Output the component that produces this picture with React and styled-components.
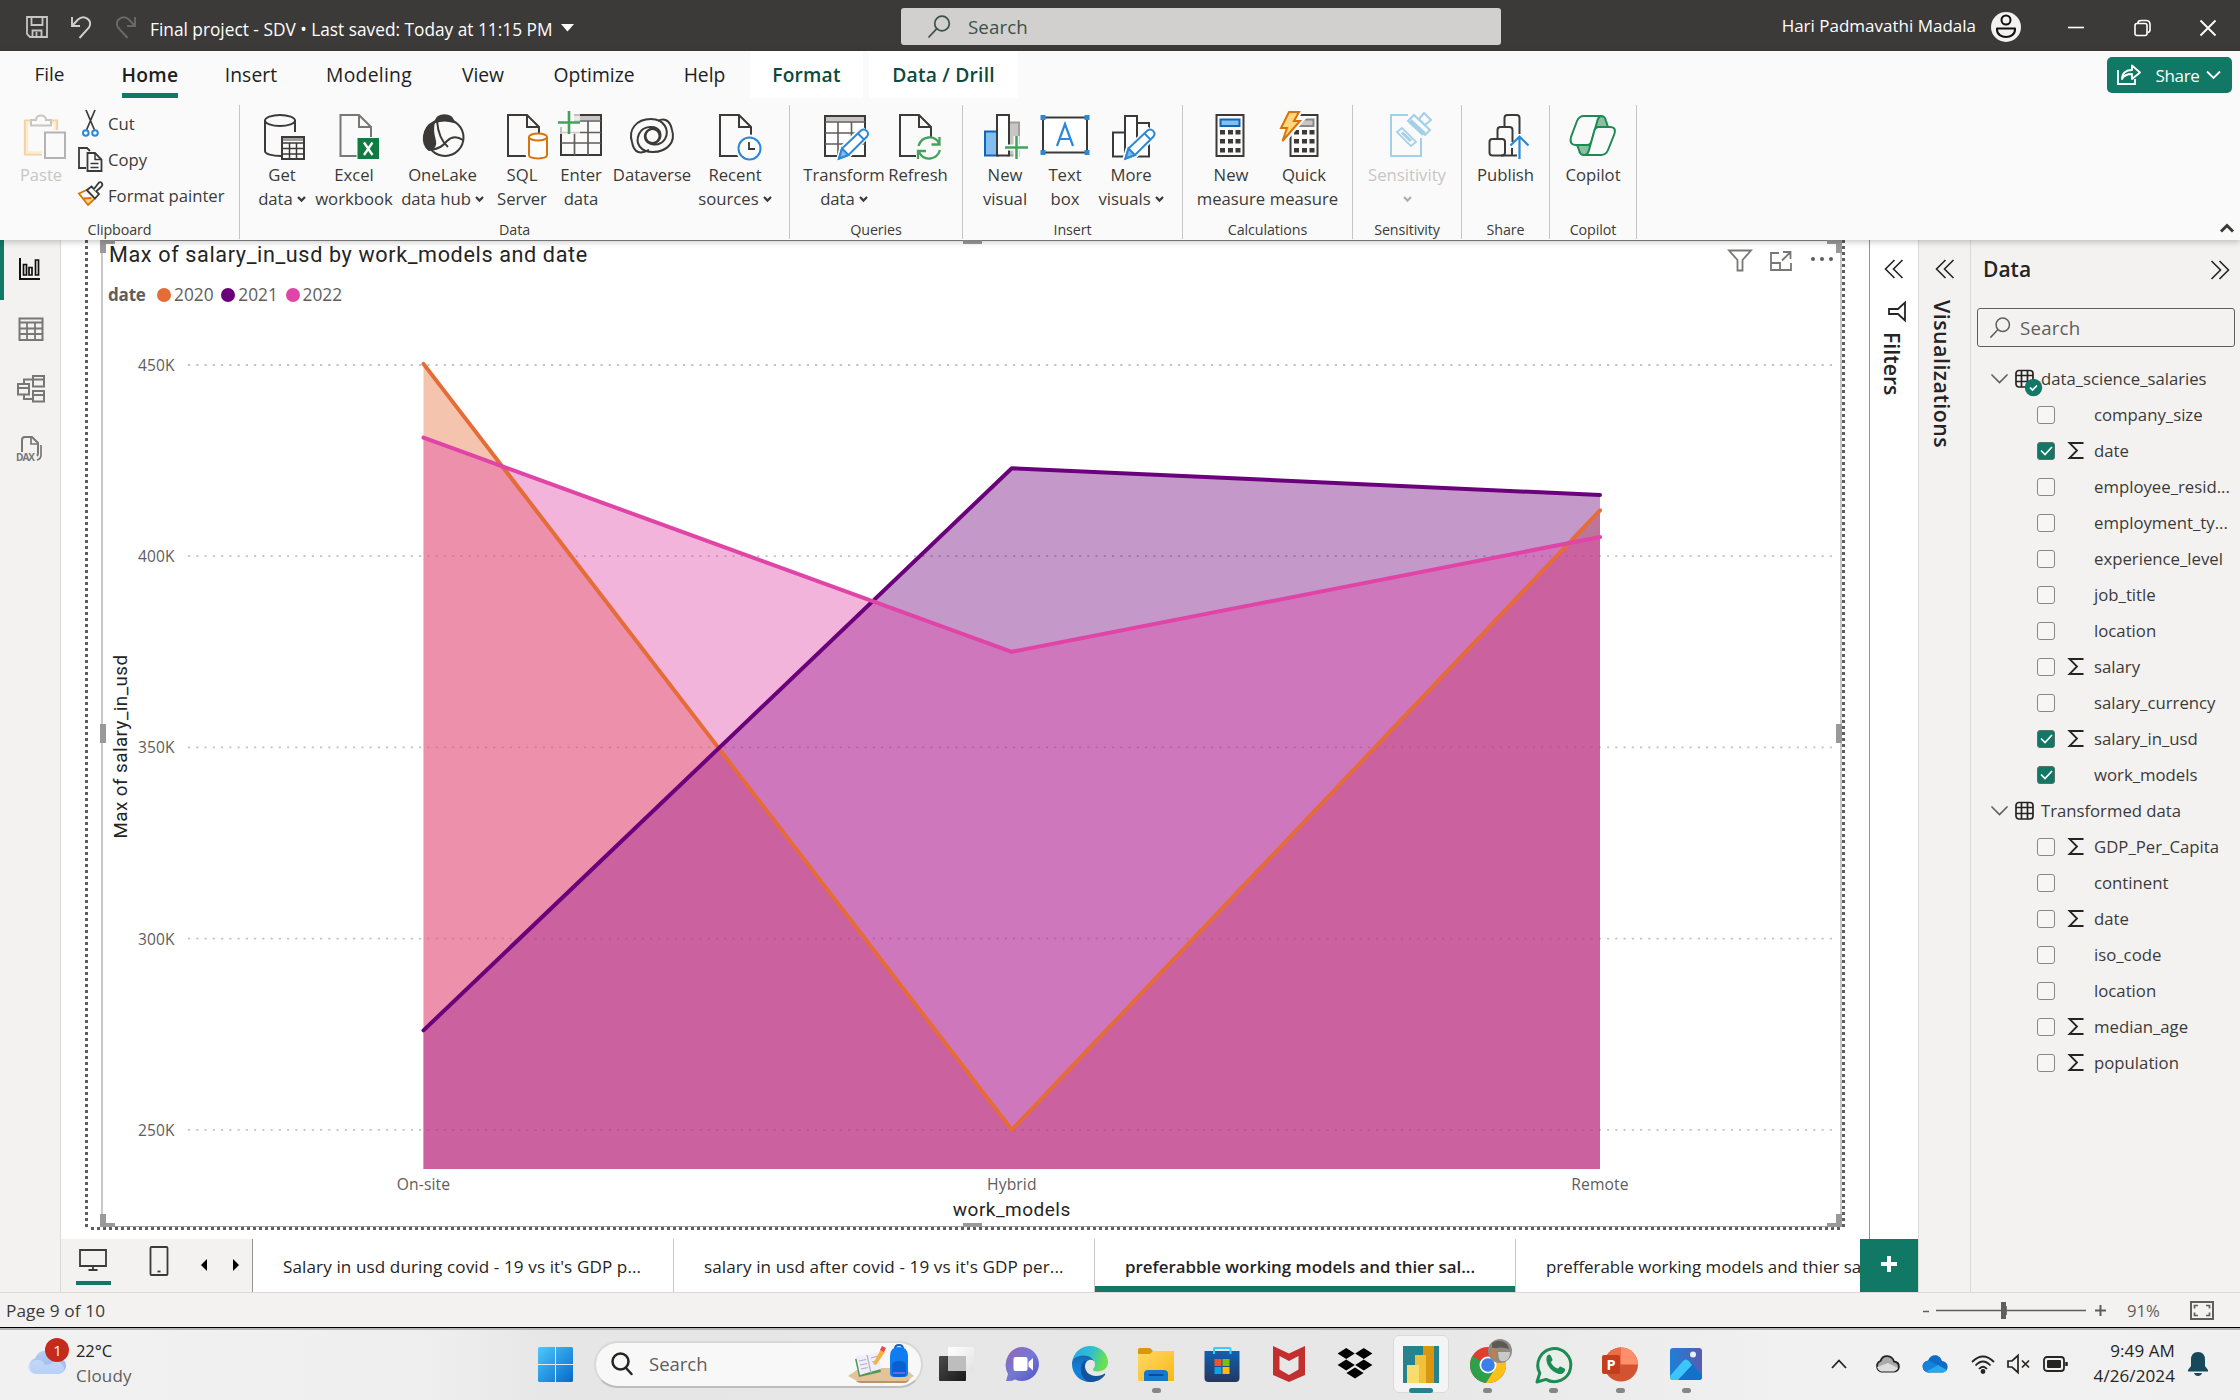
import React from 'react';
import styled, { createGlobalStyle, css } from 'styled-components';

const GREEN = '#117865';
const PANE = '#f3f2f1';
const UI = '"Open Sans", "Noto Sans", sans-serif';
const DIN = 'Roboto, "Noto Sans", sans-serif';

const Global = createGlobalStyle`
  html, body { margin: 0; padding: 0; }
  body { width: 2240px; height: 1400px; overflow: hidden; font-family: ${UI}; background: #fff; }
  * { box-sizing: border-box; }
  svg { display: block; overflow: visible; flex: none; }
`;

const Screen = styled.div`
  width: 2240px;
  height: 1400px;
  display: flex;
  flex-direction: column;
  overflow: hidden;
`;

const Text = styled.span`
  font-size: ${p => p.$size || 17}px;
  letter-spacing: ${p => p.$ls || 0}px;
  font-weight: ${p => p.$weight || 400};
  color: ${p => p.$color || '#252423'};
  white-space: nowrap;
  line-height: 1.35;
`;

/* ---------- title bar ---------- */
const TitleBar = styled.header`
  height: 51px;
  background: #3b3a38;
  display: grid;
  grid-template-columns: 901px 600px 1fr;
`;
const QuickAccess = styled.div`
  display: flex;
  align-items: center;
  padding: 2px 0 0 25px;
`;
const QuickIcon = styled.div`
  width: ${p => p.$w}px;
`;
const FileTitle = styled.div`
  display: flex;
  align-items: center;
  gap: 9px;
  padding-top: 6px;
`;
const TitleCaret = styled.svg`
  margin-bottom: 4px;
`;
const TitleSearch = styled.div`
  height: 37px;
  margin-top: 8px;
  background: #d2d0ce;
  border-radius: 3px;
  display: flex;
  align-items: center;
  gap: 17px;
  padding: 1px 0 0 26px;
`;
const Account = styled.div`
  display: flex;
  align-items: center;
  justify-content: flex-end;
  padding-top: 2px;
`;
const Avatar = styled.div`
  margin-left: 15px;
  width: 30px;
  height: 30px;
  border-radius: 50%;
  background: #f3f2f1;
`;
const WindowButton = styled.div`
  width: 66px;
  display: flex;
  justify-content: center;
`;
const WindowButtons = styled.div`
  display: flex;
  align-items: center;
  margin: 2px -1px 0 22px;
`;

/* ---------- ribbon ---------- */
const Ribbon = styled.section`
  height: 189px;
  background: #fafafa;
  position: relative;
  z-index: 2;
  box-shadow: 0 2px 6px rgba(0, 0, 0, 0.22);
  display: flex;
  flex-direction: column;
`;
const TabRow = styled.nav`
  height: 47px;
  display: flex;
`;
const RibbonTab = styled.div`
  width: ${p => p.$w}px;
  margin-right: ${p => p.$gap || 0}px;
  background: ${p => (p.$context ? '#fff' : 'transparent')};
  display: flex;
  justify-content: center;
`;
const TabLabel = styled.div`
  display: flex;
  align-items: center;
  padding-top: 6px;
  border-bottom: 5px solid ${p => (p.$active ? GREEN : 'transparent')};
`;
const ShareButton = styled.div`
  margin: 6px 8px 5px auto;
  width: 125px;
  height: 36px;
  border-radius: 5px;
  background: ${GREEN};
  display: flex;
  align-items: center;
  padding: 0 11px 0 10px;
  justify-content: space-between;
`;
const ShareWord = styled.div`
  padding: 2px 0 0 8px;
`;
const RibbonBody = styled.div`
  flex: 1;
  display: flex;
  padding: 7px 0 3px;
`;
const Group = styled.div`
  width: ${p => p.$w}px;
  border-right: 1px solid #c8c6c4;
  display: flex;
  flex-direction: column;
`;
const GroupBody = styled.div`
  height: 112px;
  display: flex;
  padding-left: ${p => p.$pad || 0}px;
`;
const GroupLabel = styled.div`
  display: flex;
  justify-content: center;
  margin-top: 3px;
`;
const BigButton = styled.div`
  width: ${p => p.$w}px;
  display: flex;
  flex-direction: column;
  align-items: center;
  padding-top: 3px;
`;
const IconSlot = styled.div`
  width: 52px;
  height: 55px;
  margin-left: ${p => (p.$dx || 0) * 2}px;
`;
const LabelLine = styled.div`
  height: 24px;
  display: flex;
  align-items: center;
  gap: 4px;
`;
const ClipList = styled.div`
  padding-top: 1px;
  display: flex;
  flex-direction: column;
`;
const ClipRow = styled.div`
  height: 36px;
  display: flex;
  align-items: center;
`;
const ClipIcon = styled.div`
  width: 30px;
  height: 30px;
  margin-left: -4px;
`;
const Collapse = styled.div`
  margin-left: auto;
  align-self: flex-end;
  padding: 0 6px 6px 0;
`;

/* ---------- main area ---------- */
const Main = styled.div`
  height: 1052px;
  display: flex;
`;
const Rail = styled.aside`
  width: 61px;
  background: ${PANE};
  border-right: 1px solid #dcdad8;
`;
const RailItem = styled.div`
  height: 60px;
  border-left: 4px solid ${p => (p.$active ? GREEN : 'transparent')};
  display: flex;
  align-items: center;
  padding: 0 0 3px ${p => (p.$active ? 14 : 12)}px;
`;
const Workspace = styled.div`
  width: 1857px;
  display: flex;
  flex-direction: column;
`;
const CanvasRow = styled.div`
  height: 999px;
  display: flex;
`;
const Canvas = styled.div`
  width: 1808px;
  background: #fff;
  padding-left: 24px;
`;
const Page = styled.div`
  width: 1760px;
  height: 990px;
  padding: 0 2px 3px 16px;
  background:
    repeating-linear-gradient(180deg, #605e5c 0 3px, #fff 3px 6px) 0 0 / 3px 100% no-repeat,
    repeating-linear-gradient(180deg, #605e5c 0 3px, #fff 3px 6px) 100% 0 / 3px 100% no-repeat,
    repeating-linear-gradient(90deg, #605e5c 0 3px, #fff 3px 6px) 0 100% / 100% 3px no-repeat;
`;
const Visual = styled.div`
  width: 1741px;
  height: 987px;
  position: relative;
  border: solid #c8c8c8;
  border-width: 1px 2px 1px 2px;
  border-top-color: #8a8886;
  border-bottom-color: #a0a0a0;
  background: #fff;
`;
const Corner = styled.div`
  position: absolute;
  width: 15px;
  height: 13px;
  border: 0 solid #999;
  ${p => p.$at.includes('t') ? css`top: -1px; border-top-width: 4px;` : css`bottom: -1px; border-bottom-width: 4px;`}
  ${p => p.$at.includes('l') ? css`left: -3px; border-left-width: 6px;` : css`right: -2px; border-right-width: 6px;`}
`;
const Handle = styled.div`
  position: absolute;
  background: #999;
  ${p => p.$v ? css`top: 483px; width: 6px; height: 19px; ${p.$end ? 'right: -2px' : 'left: -3px'};`
    : css`left: 860px; width: 19px; height: 4px; ${p.$end ? 'bottom: -1px' : 'top: -1px'};`}
`;
const VisualHead = styled.div`
  height: 28px;
  padding: 0 6px 0 6px;
  display: flex;
  justify-content: space-between;
`;
const VisualTitle = styled.div`
  font-family: ${DIN};
  font-size: 21.6px;
  letter-spacing: 0.63px;
  line-height: 27px;
  color: #252423;
  white-space: nowrap;
`;
const VisualTools = styled.div`
  display: flex;
  gap: 17px;
  padding-top: 8px;
`;
const Legend = styled.div`
  height: 28px;
  margin-top: 12px;
  padding-left: 5px;
  display: flex;
  align-items: center;
`;
const LegendItem = styled.div`
  width: 64.3px;
  display: flex;
  align-items: center;
  gap: 3px;
`;
const Swatch = styled.i`
  width: 14px;
  height: 14px;
  border-radius: 50%;
  background: ${p => p.$c};
`;
const LegendName = styled.div`
  width: 49px;
`;
const ChartSvg = styled.svg`
  font-family: ${UI};
`;

const SidePane = styled.div`
  width: ${p => p.$w}px;
  background: ${p => p.$bg};
  border-left: 1px solid ${p => p.$line};
  display: flex;
  flex-direction: column;
  align-items: center;
  padding-top: 19px;
`;
const Vertical = styled.div`
  writing-mode: vertical-rl;
  font-size: 21.3px;
  font-weight: 600;
  letter-spacing: ${p => p.$ls || 0}px;
  color: #252423;
  line-height: 24px;
  margin: ${p => p.$top}px 5px 0 0;
`;
const FilterIcon = styled.div`
  margin: 22px 0 0 4px;
`;

const DataPane = styled.div`
  flex: 1;
  background: ${PANE};
  border-left: 1px solid #dcdad8;
`;
const PaneHead = styled.div`
  height: 58px;
  display: flex;
  align-items: center;
  justify-content: space-between;
  padding: 1px 10px 0 12px;
`;
const PaneSearch = styled.div`
  margin: 10px 5px 14px 6px;
  height: 39px;
  border: 1.5px solid #605e5c;
  border-radius: 3px;
  display: flex;
  align-items: center;
  gap: 9px;
  padding: 1px 0 0 11px;
`;
const TreeRow = styled.div`
  height: 36px;
  display: flex;
  align-items: center;
`;
const TableRow = styled(TreeRow)`
  padding-left: 20px;
`;
const TableIcon = styled.div`
  margin: 0 8px 0 7px;
`;
const FieldRow = styled(TreeRow)`
  padding-left: 66px;
`;
const Check = styled.div`
  width: 18px;
  height: 18px;
  border: 1.5px solid ${p => (p.$on ? '#5b6f69' : '#8a8886')};
  border-radius: 3px;
  background: ${p => (p.$on ? GREEN : '#f7f6f5')};
  display: flex;
  align-items: center;
  justify-content: center;
`;
const SigmaSlot = styled.div`
  width: 39px;
  padding-left: 13px;
`;

/* ---------- page tabs & status ---------- */
const PageTabs = styled.div`
  height: 53px;
  display: flex;
  background: #fff;
`;
const ViewSwitch = styled.div`
  width: 192px;
  background: ${PANE};
  border-right: 1px solid #979593;
  display: flex;
  padding-left: 15px;
`;
const ViewMode = styled.div`
  width: 36px;
  height: 46px;
  margin-right: ${p => p.$gap || 0}px;
  display: flex;
  justify-content: center;
  align-items: flex-start;
  padding: ${p => p.$top}px 1px 0 0;
  border-bottom: 4px solid ${p => (p.$active ? GREEN : 'transparent')};
`;
const Arrow = styled.div`
  width: 33px;
  display: flex;
  justify-content: center;
  padding-top: 20px;
`;
const PageTab = styled.div`
  width: ${p => p.$w || 421}px;
  padding: 3px 0 0 30px;
  overflow: hidden;
  display: flex;
  align-items: center;
  border-right: ${p => (p.$w ? 0 : 1)}px solid #c8c6c4;
  box-shadow: ${p => (p.$active ? `inset 0 -6px ${GREEN}` : 'none')};
`;
const AddPage = styled.div`
  width: 58px;
  background: ${GREEN};
  display: flex;
  align-items: center;
  justify-content: center;
  padding-bottom: 3px;
`;
const StatusBar = styled.div`
  height: 38px;
  background: ${PANE};
  border-top: 1px solid #dcdad8;
  border-bottom: 1px solid #b4b4b4;
  box-shadow: inset 0 -1px #b4b4b4, inset 0 -2px #000;
  display: flex;
  justify-content: space-between;
  align-items: center;
  padding: 1px 26px 1px 6px;
`;
const Zoom = styled.div`
  display: flex;
  align-items: center;
`;
const ZoomValue = styled.div`
  width: 63px;
  margin-left: 20px;
`;

/* ---------- taskbar ---------- */
const Taskbar = styled.footer`
  height: 70px;
  background: linear-gradient(90deg, #f1f1f1 0, #efefef 420px, #e6e6e6 560px, #e7e7e7 1400px, #f1f1f1 1800px, #f0f0f0 100%);
  display: flex;
  align-items: center;
`;
const Weather = styled.div`
  width: 522px;
  padding: 0 0 3px 28px;
  display: flex;
  gap: 10px;
`;
const Stack = styled.div`
  width: ${p => (p.$right ? '100%' : 'auto')};
  display: flex;
  flex-direction: column;
  align-items: ${p => (p.$right ? 'flex-end' : 'flex-start')};
`;
const StackLine = styled.div`
  height: 25px;
  display: flex;
  align-items: center;
`;
const StartCell = styled.div`
  width: 72px;
  padding: 0 0 1px 16px;
`;
const TaskSearch = styled.div`
  width: 329px;
  height: 47px;
  margin-bottom: 2px;
  border-radius: 24px;
  border: 2px solid #d8d8d8;
  border-bottom-color: #bdbdbd;
  background: #f8f8f8;
  display: flex;
  align-items: center;
  padding: 0 6px 0 15px;
`;
const SearchWord = styled.div`
  flex: 1;
  padding-left: 16px;
`;
const AppCell = styled.div`
  width: 66.3px;
  height: 70px;
  display: flex;
  flex-direction: column;
  align-items: center;
  padding: 15px 0 0 2px;
`;
const AppTile = styled.div`
  width: ${p => (p.$active ? 56 : 40)}px;
  height: ${p => (p.$active ? 58 : 40)}px;
  margin-top: ${p => (p.$active ? -10 : 0)}px;
  display: flex;
  justify-content: center;
  ${p => p.$active && css`background: #f4f4f4; border: 1px solid #dadada; border-radius: 6px; padding-top: 9px;`}
`;
const Running = styled.i`
  width: ${p => (p.$active ? 24 : 9)}px;
  height: 5px;
  border-radius: 3px;
  background: ${p => (p.$active ? '#26828f' : '#868686')};
  margin-top: ${p => (p.$active ? -5 : 3)}px;
`;
const Tray = styled.div`
  margin-left: auto;
  display: flex;
  align-items: center;
  padding: 0 31px 2px 0;
`;
const TrayCell = styled.div`
  width: ${p => p.$w}px;
  display: flex;
  justify-content: center;
  padding-left: ${p => p.$pad || 0}px;
`;

/* ---------- icons ---------- */
const S = ({ w = 52, h = 52, vb, children, ...r }) => (
  <svg width={w} height={h} viewBox={vb || `0 0 ${w} ${h}`} fill="none" stroke="#3b3a39" strokeWidth="2" {...r}>{children}</svg>
);
const Caret = ({ color = '#3b3a39' }) => (
  <S w={9} h={8} stroke={color} strokeWidth="2.2"><path d="M1 2l3.5 3.6L8 2" /></S>
);
const Chevrons = ({ flip }) => (
  <S w={20} h={20} stroke="#252423" strokeWidth="1.6" transform={flip ? 'scale(-1 1)' : undefined}>
    <path d="M10.500 1L1.500 10l9 9M18.500 1l-9 9 9 9" />
  </S>
);
const Magnifier = ({ size = 24, color = '#3b3a39', sw = 1.7 }) => (
  <S w={size} h={size} vb="0 0 24 24" stroke={color} strokeWidth={sw}>
    <circle cx="15" cy="8.500" r="7.300" /><path d="M9.800 13.700L1.500 22.500" />
  </S>
);
const Doc = ({ x = 10, y = 7, w = 31, h = 41, f = 12, c = '#3b3a39' }) => (
  <g stroke={c}>
    <path d={`M${x} ${y}h${w - f}l${f} ${f}v${h - f}h${-w}z`} fill="#fafafa" />
    <path d={`M${x + w - f} ${y}v${f}h${f}`} />
  </g>
);

const ic = {
  paste: (
    <S>
      <path d="M15 12.500H9v34h32v-34h-7" stroke="#f6cfa3" strokeWidth="2.200" />
      <path d="M11 14.500h28v30H11z" fill="none" stroke="#fbeccb" strokeWidth="2.500" />
      <path d="M15 17.500v-5.500h5c0-6 10-6 10 0h5v5.500z" stroke="#c8c6c4" fill="#fafafa" />
      <rect x="26" y="22" width="22" height="28" fill="#fafafa" stroke="none" />
      <rect x="29" y="24.500" width="20" height="25.500" stroke="#b5b3b1" fill="#fafafa" />
    </S>
  ),
  getdata: (
    <S>
      <path d="M7 12v31c0 3 7 5 16 5M37 12v12" />
      <ellipse cx="22" cy="12.500" rx="15" ry="5.500" />
      <rect x="24" y="29" width="22" height="22" fill="#fafafa" />
      <path d="M24 31.500h22" stroke="#a19f9d" strokeWidth="3" />
      <path d="M24 35h22M24 40.500h22M24 46h22M31.500 35v16M38.500 35v16" strokeWidth="1.500" />
      <rect x="24" y="29" width="22" height="22" />
    </S>
  ),
  excel: (
    <S>
      <Doc x={7.500} w={30.500} c="#797775" />
      <rect x="24" y="29.500" width="22.500" height="22" fill="#107c41" stroke="#fafafa" strokeWidth="1" />
      <path d="M31 34.500l8.500 12.500M39.500 34.500L31 47" stroke="#fff" strokeWidth="2.300" />
    </S>
  ),
  onelake: (
    <S>
      <path d="M17 14C20 5 33 5 36 14c-6-2-13-2-19 0z" fill="#3b3a39" />
      <path d="M16 14C4 20 3 36 11 42c6-2 7-5 6-9-2-7-3-12-1-19z" fill="#3b3a39" />
      <circle cx="27" cy="29.500" r="18.500" />
      <path d="M19 13c1 12 4 20 11 26M10 41c8 2 14-2 19-8 5-5 10-5 16-1" />
    </S>
  ),
  sql: (
    <S>
      <Doc x={7} />
      <path d="M27 30v17c0 3.600 19 3.600 19 0V30" fill="#fafafa" stroke="#fafafa" strokeWidth="5" />
      <path d="M28 29v18c0 4.500 18 4.500 18 0V29" fill="#fff" stroke="#d8730c" />
      <ellipse cx="37" cy="29" rx="9" ry="3.500" stroke="#d8730c" fill="#fff" />
    </S>
  ),
  enter: (
    <S>
      <path d="M20 7h27v40H7V19" />
      <rect x="20" y="8" width="26" height="4" fill="#c8c6c4" stroke="none" />
      <path d="M20 13h27M7 24.500h40M7 35h40M20.500 24v23M34 13v34" stroke="#605e5c" strokeWidth="1.700" />
      <rect x="4" y="4" width="22" height="22" fill="#fafafa" stroke="none" opacity=".7" />
      <path d="M4 14.500h22M15 3v23" stroke="#44a35a" strokeWidth="2.600" />
    </S>
  ),
  dataverse: (
    <S>
      <path d="M6 34C2 22 10 11 25 11c13 0 19 11 14 20-5 8-18 7-20-1-1-6 5-11 11-9" />
      <path d="M46 22c4 12-5 22-19 22-13 0-18-9-14-18 4-9 18-9 21-2 2 7-3 13-10 11" />
      <path d="M6 34c2 12 9 12 17 8M46 22c-2-11-9-12-14-9" />
      <circle cx="26.500" cy="28" r="7" />
    </S>
  ),
  recent: (
    <S>
      <Doc x={6} />
      <circle cx="35.500" cy="40.500" r="11.500" fill="#fff" stroke="#fafafa" strokeWidth="5" />
      <circle cx="35.500" cy="40.500" r="11" fill="#fff" stroke="#2b88d8" />
      <path d="M35 34v7h6" strokeWidth="1.800" />
    </S>
  ),
  transform: (
    <S>
      <rect x="6" y="8" width="40" height="40" fill="#fff" />
      <rect x="7" y="9" width="38" height="4.500" fill="#c8c6c4" stroke="none" />
      <path d="M6 14h40M6 25h40M6 36h40M19 14v34M32.500 14v34" strokeWidth="1.600" stroke="#605e5c" />
      <path d="M20 50l3-10 20-19 6 6-19 20z" fill="#fff" stroke="#fafafa" strokeWidth="5" />
      <path d="M20 50.500l3-10L42 22.500c4-3 9 2 6 6L29.500 47z" fill="#fff" stroke="#2b88d8" />
      <path d="M20 50.500l3-10 6.500 6.500z" fill="#83beec" stroke="#2b88d8" /><path d="M39 25.500l6 6" stroke="#2b88d8" />
    </S>
  ),
  refresh: (
    <S>
      <Doc x={4} />
      <rect x="20" y="29" width="28" height="24" fill="#fafafa" stroke="none" />
      <g stroke="#44a35a" strokeWidth="2.300">
        <path d="M22.500 38c3-10 16-12 21-2M43.500 29v7.500h-8M44 42c-3 10-16 12-21 2M22 51v-8h8" />
      </g>
    </S>
  ),
  newvisual: (
    <S>
      <rect x="28" y="14.500" width="11" height="33" fill="#c8c6c4" stroke="#a19f9d" />
      <rect x="5" y="23.500" width="13" height="24" fill="#83beec" stroke="#1066b5" />
      <rect x="17" y="7" width="12" height="40.500" fill="#fff" />
      <path d="M36.500 28v23M25 39.500h23" stroke="#fafafa" strokeWidth="6" />
      <path d="M36.500 28v23M25 39.500h23" stroke="#44a35a" strokeWidth="2.500" />
    </S>
  ),
  textbox: (
    <S>
      <rect x="4" y="9.500" width="44" height="35" fill="#fff" />
      <path d="M18 38l8-22 8 22M20.500 31h11" stroke="#2b88d8" strokeWidth="2.200" />
      <g fill="#2b88d8" stroke="none"><rect x="1.500" y="7" width="5" height="5" /><rect x="45.500" y="7" width="5" height="5" /><rect x="1.500" y="42" width="5" height="5" /><rect x="45.500" y="42" width="5" height="5" /></g>
    </S>
  ),
  morevisual: (
    <S>
      <rect x="5" y="24.500" width="13" height="24" fill="#fff" />
      <rect x="29" y="15" width="12" height="33.500" fill="#fff" />
      <rect x="17" y="8" width="12" height="40.500" fill="#fff" />
      <path d="M17 51l3-10 20-19 6 6-19 20z" fill="#fff" stroke="#fafafa" strokeWidth="5" />
      <path d="M17.500 50.500l3-10L39.500 22.500c4-3 9 2 6 6L27 47z" fill="#fff" stroke="#2b88d8" />
      <path d="M17.500 50.500l3-10 6.500 6.500z" fill="#83beec" stroke="#2b88d8" /><path d="M36.500 25.500l6 6" stroke="#2b88d8" />
    </S>
  ),
  calc: (
    <S>
      <rect x="12.500" y="7" width="27" height="41" fill="#fafafa" />
      <rect x="16.500" y="11.500" width="19" height="6.500" fill="#83beec" stroke="#1066b5" />
      <g fill="#3b3a39" stroke="none">
        {[22, 31, 40].map(y => [16, 24, 31.500].map(x => <rect key={x + y * 100} x={x} y={y} width="5" height="4.500" />))}
      </g>
    </S>
  ),
  quick: (
    <S>
      <rect x="16.500" y="7" width="27" height="41" fill="#fafafa" />
      <rect x="20.500" y="11.500" width="19" height="6.500" fill="#c8c6c4" stroke="#8a8886" />
      <g fill="#3b3a39" stroke="none">
        {[22, 31, 40].map(y => [20, 28, 35.500].map(x => <rect key={x + y * 100} x={x} y={y} width="5" height="4.500" />))}
      </g>
      <path d="M15 4h10l-5 9h6L9 33l4-13H7z" fill="#fafafa" stroke="#fafafa" strokeWidth="6" />
      <path d="M15 4h10l-5 9h6L8.500 33 13 20H7z" fill="#fcd77f" stroke="#d8730c" />
    </S>
  ),
  sens: (
    <S stroke="#a3cfe9">
      <path d="M24 7H7v41h30V30" fill="#fafafa" />
      <path d="M13 24l5-4 14 14-5 4z" strokeWidth="1.700" /><path d="M18 24.500l9 8.500" strokeWidth="3" />
      <path d="M24 13l6-6 16 15-5 5z" /><path d="M26 13l14 13" strokeWidth="5" />
      <path d="M35 11l5-6 7 7-6 5z" fill="#fafafa" />
    </S>
  ),
  publish: (
    <S>
      <path d="M20.500 19V10q0-3 3-3h9q3 0 3 3v16" />
      <path d="M13.500 31V22q0-3 3-3h9q3 0 3 3v12" />
      <rect x="5.500" y="31" width="15.500" height="16.500" rx="3" fill="#fafafa" />
      <path d="M17 47.500h16" /><path d="M28 40v7" />
      <path d="M35.500 51V29M26.500 37.500l9-9 9 9" stroke="#2b88d8" strokeWidth="2.200" />
    </S>
  ),
  copilot: (
    <S stroke="#1d8a53" strokeWidth="2">
      <path d="M27 8h7q4 0 5 5l2 6H29z" fill="#8abfa2" />
      <path d="M24 47h-7q-4 0-5-5l-2-5h14z" fill="#8abfa2" />
      <path d="M33 8H17q-5 0-7 5L4 29q-2 8 5 8h11q4 0 5-5l5-18q1-5 4-6z" fill="#fafafa" />
      <path d="M19 47h15q5 0 7-5l6-15q3-8-4-8H32q-4 0-5 5l-5 18q-1 4-4 5z" fill="#fafafa" />
    </S>
  ),
};

const clip = {
  cut: (
    <S w={28} h={30}>
      <path d="M8 1l8.500 20M17 1L8.500 21" strokeWidth="1.700" />
      <circle cx="7.800" cy="24" r="2.800" stroke="#2b88d8" /><circle cx="17" cy="24" r="2.800" stroke="#2b88d8" />
    </S>
  ),
  copy: (
    <S w={28} h={30}>
      <path d="M8 23H1V3h8l3 3" strokeWidth="1.800" />
      <path d="M9.500 8h7.500l6.500 6.500v11.500h-14z" fill="#fafafa" strokeWidth="1.800" /><path d="M17 8v6.500h6.500M12.500 18.500h8M12.500 22.500h8" strokeWidth="1.500" />
    </S>
  ),
  brush: (
    <S w={28} h={30} strokeWidth="1.800">
      <path d="M6 18l10-1-6 7z" fill="#fcd77f" stroke="none" />
      <path d="M1 12.500l7.500-3.500 8.500 8.500-7 6.500zM5.500 17.500l8-.5" stroke="#d8730c" />
      <path d="M9 9l4.500-3.500 7.500 7.500-4 4.500z" fill="#fafafa" /><path d="M16 8l5-6.500q2-1 3 1t-1 3.500L18 10.500" fill="#fafafa" />
    </S>
  ),
};

const railIcons = [
  <S w={24} h={24} stroke="#111"><path d="M2 1v21h20" /><path d="M5.500 7.500v10.500h3v-10.500zM11 10.500v7.500h3v-7.500zM17.500 3v15h3V3z" strokeWidth="1.700" /></S>,
  <S w={28} h={24} stroke="#797775"><rect x="3.500" y="1.500" width="23" height="21.500" /><path d="M3.500 5.500h23M3.500 11.500h23M3.500 17h23M11 5.500V23M19 5.500V23" strokeWidth="1.800" /></S>,
  <S w={30} h={28} stroke="#797775"><rect x="2" y="9" width="11" height="10.500" /><path d="M2 13h11" /><rect x="17" y="1" width="11" height="10.500" /><path d="M17 4.500h11" /><rect x="17" y="16" width="11" height="10.500" /><path d="M17 20h11M8 9V4.500h9M8 19.500V24h9" /></S>,
  <S w={28} h={26} stroke="#797775">
    <path d="M6 16V4q0-3 3-3h7l6 6v10q0 2-1 3" /><path d="M15 1v7h7M25 9v10q0 4-4 5" strokeWidth="1.700" />
    <text x="0" y="24.500" fontSize="10" fontWeight="700" fill="#797775" stroke="none" fontFamily={UI} textLength="19">DAX</text>
  </S>,
];

/* ---------- data ---------- */
const ribbonTabs = [
  ['File', 99, 19, 0], ['Home', 102, 19.3, 0.3, 'active'], ['Insert', 100, 19.3, 0.1], ['Modeling', 136, 19.3, 0.3], ['View', 92, 19.3, 0],
  ['Optimize', 130, 19.3, 0], ['Help', 91, 19.3, 0], ['Format', 113, 19.2, 0.2, 'ctx', 6], ['Data / Drill', 149, 19.3, 0.2, 'ctx'],
];

const groups = [
  { label: 'Data', w: 550, pad: 6, items: [
    ['getdata', 72, 2, 'Get', 'data', 1], ['excel', 72, 5, 'Excel', 'workbook'], ['onelake', 105, 1, 'OneLake', 'data hub', 1],
    ['sql', 54, 5, 'SQL', 'Server'], ['enter', 64, -1, 'Enter', 'data'], ['dataverse', 78, 0, 'Dataverse', ''], ['recent', 88, 5, 'Recent', 'sources', 1]] },
  { label: 'Queries', w: 173, pad: 9, items: [['transform', 90, 1, 'Transform', 'data', 1], ['refresh', 58, 4, 'Refresh', '']] },
  { label: 'Insert', w: 220, pad: 12, items: [['newvisual', 60, 1, 'New', 'visual'], ['textbox', 60, 0, 'Text', 'box'], ['morevisual', 72, 3, 'More', 'visuals', 1]] },
  { label: 'Calculations', w: 170, pad: 11, items: [['calc', 74, -1, 'New', 'measure'], ['quick', 72, -4, 'Quick', 'measure']] },
  { label: 'Sensitivity', w: 109, off: true, items: [['sens', 108, 3, 'Sensitivity', '', 1]] },
  { label: 'Share', w: 88, items: [['publish', 88, 4, 'Publish', '']] },
  { label: 'Copilot', w: 87, items: [['copilot', 87, 0, 'Copilot', '']] },
];

const tree = [
  { t: 'data_science_salaries', badge: true }, { f: 'company_size' }, { f: 'date', s: 1, on: 1 }, { f: 'employee_resid...' },
  { f: 'employment_ty...' }, { f: 'experience_level' }, { f: 'job_title' }, { f: 'location' }, { f: 'salary', s: 1 },
  { f: 'salary_currency' }, { f: 'salary_in_usd', s: 1, on: 1 }, { f: 'work_models', on: 1 }, { t: 'Transformed data' },
  { f: 'GDP_Per_Capita', s: 1 }, { f: 'continent' }, { f: 'date', s: 1 }, { f: 'iso_code' }, { f: 'location' },
  { f: 'median_age', s: 1 }, { f: 'population', s: 1 },
];

const series = [
  { name: '2020', color: '#E66C37', v: [450.3, 250, 412] },
  { name: '2021', color: '#6B007B', v: [276, 423, 416] },
  { name: '2022', color: '#E044A7', v: [431, 375, 405] },
];

/* ---------- chart ---------- */
function AreaChart() {
  const X = [320.5, 908.8, 1497];
  const Y = v => 56 + (450 - v) * 3.824;
  const base = 860;
  const xs = (v, k) => `${X[k]},${Y(v)}`;
  return (
    <ChartSvg width="1737" height="914" viewBox="0 0 1737 914">
      {[450, 400, 350, 300, 250].map(v => (
        <g key={v}>
          <line x1="85" x2="1733" y1={Y(v)} y2={Y(v)} stroke="#c4c4c4" strokeWidth="1.800" strokeDasharray="2.200 6.050" />
          <text x="71.500" y={Y(v) + 6} textAnchor="end" fontSize="15.500" fill="#605e5c" textLength="36.500">{v}K</text>
        </g>
      ))}
      {series.map(s => (
        <polygon key={s.name} fill={s.color} fillOpacity="0.4" points={`${X[0]},${base} ${s.v.map(xs).join(' ')} ${X[2]},${base}`} />
      ))}
      {series.map(s => (
        <polyline key={s.name} fill="none" stroke={s.color} strokeWidth="4" strokeLinejoin="round" strokeLinecap="round" points={s.v.map(xs).join(' ')} />
      ))}
      {['On-site', 'Hybrid', 'Remote'].map((n, k) => (
        <text key={n} x={X[k]} y="881" textAnchor="middle" fontSize="15.700" letterSpacing="0.1" fill="#605e5c">{n}</text>
      ))}
      <text x={X[1]} y="906.500" textAnchor="middle" fontFamily={DIN} fontSize="19" letterSpacing="0.5" fill="#252423">work_models</text>
      <text transform="translate(23.500 437.500) rotate(-90)" textAnchor="middle" fontFamily={DIN} fontSize="18.800" letterSpacing="0.45" fill="#252423">Max of salary_in_usd</text>
    </ChartSvg>
  );
}

/* ---------- taskbar apps ---------- */
const A = ({ children }) => <svg width="36" height="38" viewBox="0 0 36 38">{children}</svg>;
const apps = [
  { k: 'taskview', el: <A><defs><linearGradient id="tv" x1="0" y1="0" x2="1" y2="1"><stop stopColor="#fff" /><stop offset="1" stopColor="#e2e2e2" /></linearGradient><linearGradient id="tw" x1="0" y1="0" x2="1" y2="1"><stop stopColor="#4a4a4a" /><stop offset="1" stopColor="#1a1a1a" /></linearGradient></defs><rect x="0" y="11" width="27" height="25" rx="1" fill="url(#tw)" /><rect x="9" y="2" width="26" height="24" rx="1" fill="url(#tv)" /><rect x="9" y="11" width="18" height="15" fill="#bdbdbd" /></A> },
  { k: 'teams', el: <A><defs><linearGradient id="tm" x1="0" y1="0" x2="1" y2="1"><stop stopColor="#9763b0" /><stop offset=".5" stopColor="#7478d8" /><stop offset="1" stopColor="#5053c4" /></linearGradient></defs><path d="M18 2a17 17 0 1 1-8 32.500q-3 2-9 1.500l2-7A17 18 0 0 1 18 2z" fill="url(#tm)" /><rect x="8.500" y="12" width="14" height="14" rx="2" fill="#fff" /><path d="M23.500 17l4.500-4v12.500l-4.500-4z" fill="#fff" /></A> },
  { k: 'edge', el: <A><defs><linearGradient id="e1" x1="0" y1="0" x2="1" y2=".3"><stop stopColor="#2aa6ea" /><stop offset=".55" stopColor="#30bfcf" /><stop offset="1" stopColor="#6be04e" /></linearGradient><linearGradient id="e2" x1="0" y1="0" x2="0" y2="1"><stop stopColor="#1565b0" /><stop offset=".6" stopColor="#0f84dc" /><stop offset="1" stopColor="#1279d0" /></linearGradient></defs><g transform="translate(0 1)"><path d="M0 18C0 11 5 8 12 8c6 0 10 3 10 7-4-3-9 0-9 6 0 7 6 12 15 12-3 2-6 3-10 3C8 36 0 28 0 18z" fill="url(#e2)" /><path d="M13 18c-1 7 4 12 11 12 4 0 7-1 8.500-2.500q1 0 .5 1.500C29 34 24 36 18 36c-6-1-10-8-9-14 0-4 2-7 6-8-1 1-2 2-2 4z" fill="#12539c" /><path d="M.500 14C3 5 10 0 18 0c11 0 18 8 18 16 0 6-5 10-11 9.500-3 0-4-1-4-2 0-1 2-2 2-5 0-5-5-9-11-9C7 9.500 3 11 .500 14z" fill="url(#e1)" /></g></A> },
  { k: 'explorer', run: 1, el: <A><defs><linearGradient id="fx" x1="0" y1="0" x2="1" y2="1"><stop stopColor="#ffd968" /><stop offset="1" stopColor="#f9b815" /></linearGradient></defs><path d="M0 5q0-2 2-2h10l3 3-3 5H0z" fill="#d9990c" /><path d="M0 9h12l3-3h21v30H2q-2 0-2-2z" fill="url(#fx)" /><path d="M6 36v-7q0-4 4-4h16q4 0 4 4v7z" fill="#1478cc" /><rect x="10.500" y="29" width="15" height="2" rx="1" fill="#0b4f93" /></A> },
  { k: 'store', el: <A><defs><linearGradient id="ms" x1="0" y1="0" x2="0" y2="1"><stop stopColor="#0f62b0" /><stop offset="1" stopColor="#26365f" /></linearGradient></defs><path d="M.500 6h35v27q0 4-4 4h-27q-4 0-4-4z" fill="url(#ms)" /><path d="M10 9V3.500Q10 3 11 3h14.500q1 0 1 .5V9" fill="none" stroke="#3cc9fb" strokeWidth="2" /><rect x="10.500" y="14" width="7" height="7" fill="#f35325" /><rect x="18.500" y="14" width="7" height="7" fill="#81bc06" /><rect x="10.500" y="22" width="7" height="7" fill="#05a6f0" /><rect x="18.500" y="22" width="7" height="7" fill="#ffba08" /></A> },
  { k: 'mcafee', el: <A><path d="M2 1l16 7.500L34 1v29l-16 7-16-7zM8.500 11v13.500l9.500 5.500 9.500-5.500V11L18 16z" fill="#c22f2e" fillRule="evenodd" /></A> },
  { k: 'dropbox', el: <A><path d="M9.200 3l8.600 5.500-8.600 5.500L.600 8.500zM26.800 3l8.600 5.500-8.600 5.500-8.600-5.500zM9.200 14.500l8.600 5.500-8.600 5.500L.600 20zM26.800 14.500l8.600 5.500-8.600 5.500-8.600-5.500zM18 22.500l8.600 5.500-8.600 5.500L9.400 28z" fill="#000" /></A> },
  { k: 'powerbi', run: 1, active: 1, el: <A><rect y="1" width="36" height="37" fill="#26828f" /><rect x="20" y="1" width="11" height="37" fill="#d9960f" /><rect x="12" y="10" width="11" height="28" fill="#f0c23c" /><rect x="4" y="20" width="12" height="18" fill="#f9dc70" /></A> },
  { k: 'chrome', run: 1, el: <A><circle cx="18" cy="20" r="18" fill="#e33b2e" /><path d="M18 20L2.400 11A18 18 0 0 0 16 37.900L25 25z" fill="#2da04c" /><path d="M18 12h16.100A18 18 0 0 1 16 37.900L25 24z" fill="#fbc116" /><circle cx="18" cy="20" r="8.500" fill="#fff" /><circle cx="18" cy="20" r="6.800" fill="#3b7ded" /><circle cx="30" cy="6" r="12" fill="#8f8a82" /><path d="M22-2q8-5 15 1l2 5q-8-3-17 0z" fill="#5d5a56" /><path d="M21 4q3-3 6 1l-1 10q-6-3-5-11z" fill="#b98250" /><path d="M28 7h12q0 5-3 8-6 3-8-1z" fill="#c9c9c7" /></A> },
  { k: 'whatsapp', run: 1, el: <A><path d="M1 37l2.800-9A16.500 16.500 0 1 1 10 34.400z" fill="#e9eeea" stroke="#1f8b54" strokeWidth="3" strokeLinejoin="round" /><path d="M11 11c2-2 3-2 4 0l1.500 3.500c0 2-2 2-1.500 3 1.500 3 3.500 5 6.500 6 1.500 0 1.500-2 3-2l4 2c1.500 1 0 4-2 5-6 3-19-8-15.500-17.500z" fill="#1f8b54" /></A> },
  { k: 'ppt', run: 1, el: <A><circle cx="19" cy="19.500" r="17" fill="#d35230" /><path d="M19 2.500A17 17 0 0 1 36 19.500H19z" fill="#ff8f6b" /><path d="M19 2.500A17 17 0 0 0 2 19.500H19z" fill="#ed6c47" /><rect x="0" y="10" width="18" height="19" rx="2" fill="#c43e1c" /><text x="9" y="25" textAnchor="middle" fontSize="14.500" fontWeight="700" fill="#fff" fontFamily={UI}>P</text></A> },
  { k: 'photos', run: 1, el: <A><defs><linearGradient id="ph" x1="0" y1="0" x2="1" y2="0"><stop stopColor="#1c80d8" /><stop offset="1" stopColor="#5b5bb0" /></linearGradient></defs><rect x="2" y="3" width="32" height="32" rx="3" fill="url(#ph)" /><path d="M3 33L16 16q3-3 6 0l12 14v2q0 3-3 3H5z" fill="#1471c9" /><path d="M2 31L15 16q3-3 6 0l3 4L10 35H5q-3 0-3-3z" fill="#3cc5f7" /><circle cx="25" cy="9.500" r="3" fill="#e8f1fb" /></A> },
];

export default function App() {
  return (
    <Screen>
      <Global />
      <TitleBar>
        <QuickAccess>
          <QuickIcon $w={45}><S w={24} h={24} stroke="#c8c6c4" strokeWidth="1.800"><path d="M2 2h20v20H5l-3-3zM6.500 2v8h11V2M7.500 22v-6.500h9V22M11.500 17v5" /></S></QuickIcon>
          <QuickIcon $w={45}><S w={24} h={24} stroke="#d2d0ce" strokeWidth="1.900"><path d="M2 2v9h8M2.500 10.500L8 4.500C14-1 23 5 19 12.500L9.500 23" /></S></QuickIcon>
          <QuickIcon $w={35}><S w={24} h={24} stroke="#6b6967" strokeWidth="1.900"><path d="M20 2v9h-8M19.500 10.500L14 4.500C8-1-1 5 3 12.500L12.500 23" /></S></QuickIcon>
          <FileTitle>
            <Text $size={17.300} $color="#fff">Final project - SDV • Last saved: Today at 11:15 PM</Text>
            <TitleCaret width="13" height="8"><path d="M0 0h13l-6.500 7.500z" fill="#fff" /></TitleCaret>
          </FileTitle>
        </QuickAccess>
        <TitleSearch>
          <Magnifier size={24} color="#3b5049" />
          <Text $size={18.700} $ls={0.1} $color="#3b5049">Search</Text>
        </TitleSearch>
        <Account>
          <Text $size={17} $color="#fff">Hari Padmavathi Madala</Text>
          <Avatar><svg width="30" height="30" fill="none" stroke="#111" strokeWidth="2"><circle cx="15" cy="8" r="4.500" /><path d="M6 16.500h18v1c0 10-18 10-18 0z" strokeLinejoin="round" /></svg></Avatar>
          <WindowButtons>
            <WindowButton><S w={18} h={18} stroke="#fff" strokeWidth="1.600"><path d="M1 8.500h16" /></S></WindowButton>
            <WindowButton><S w={18} h={18} stroke="#fff" strokeWidth="1.600"><rect x="2" y="4.500" width="12" height="12" rx="2" /><path d="M5 4q0-2.500 3-2.500h5q4 0 4 4v5q0 3-2.500 3" /></S></WindowButton>
            <WindowButton><S w={18} h={18} stroke="#fff" strokeWidth="1.800"><path d="M1.500 1.500l15 15M16.500 1.500l-15 15" /></S></WindowButton>
          </WindowButtons>
        </Account>
      </TitleBar>

      <Ribbon>
        <TabRow>
          {ribbonTabs.map(([t, w, size, ls, kind, gap]) => (
            <RibbonTab key={t} $w={w} $gap={gap} $context={kind === 'ctx'}>
              <TabLabel $active={kind === 'active'}>
                <Text $size={size} $ls={ls} $weight={kind ? 600 : 400} $color={kind === 'ctx' ? '#0b4a3c' : '#201f1e'}>{t}</Text>
              </TabLabel>
            </RibbonTab>
          ))}
          <ShareButton>
            <S w={24} h={22} stroke="#fff" strokeWidth="1.800"><path d="M1 6v14h17v-5" /><path d="M5 15c0-6 4-9 10-9V1.500l8 7-8 6.500v-5c-5 0-8 1-10 5z" strokeLinejoin="round" /></S>
            <ShareWord><Text $size={17} $ls={-0.3} $color="#fff">Share</Text></ShareWord>
            <S w={15} h={10} stroke="#fff" strokeWidth="1.800"><path d="M1 1.500l6.500 6.500L14 1.500" /></S>
          </ShareButton>
        </TabRow>
        <RibbonBody>
          <Group $w={240}>
            <GroupBody>
              <BigButton $w={82}>
                <IconSlot $dx={1}>{ic.paste}</IconSlot>
                <LabelLine><Text $size={16.500} $color="#c8c6c4">Paste</Text></LabelLine>
              </BigButton>
              <ClipList>
                {[['cut', 'Cut'], ['copy', 'Copy'], ['brush', 'Format painter']].map(([k, t]) => (
                  <ClipRow key={k}><ClipIcon>{clip[k]}</ClipIcon><Text $size={16.700} $color="#3b3a39">{t}</Text></ClipRow>
                ))}
              </ClipList>
            </GroupBody>
            <GroupLabel><Text $size={14.300} $ls={-0.1} $color="#3b3a39">Clipboard</Text></GroupLabel>
          </Group>
          {groups.map(g => (
            <Group key={g.label} $w={g.w}>
              <GroupBody $pad={g.pad}>
                {g.items.map(([k, w, dx, a, b, caret]) => (
                  <BigButton key={k} $w={w}>
                    <IconSlot $dx={dx}>{ic[k]}</IconSlot>
                    <LabelLine><Text $size={16.700} $color={g.off ? '#c8c6c4' : '#3b3a39'}>{a}</Text></LabelLine>
                    <LabelLine>{b && <Text $size={16.700} $color="#3b3a39">{b}</Text>}{caret && <Caret color={g.off ? '#b0aeac' : undefined} />}</LabelLine>
                  </BigButton>
                ))}
              </GroupBody>
              <GroupLabel><Text $size={14.300} $ls={-0.1} $color="#3b3a39">{g.label}</Text></GroupLabel>
            </Group>
          ))}
          <Collapse><S w={14} h={10} strokeWidth="3"><path d="M1 8.500l6-6 6 6" /></S></Collapse>
        </RibbonBody>
      </Ribbon>

      <Main>
        <Rail>{railIcons.map((icon, i) => <RailItem key={i} $active={i === 0}>{icon}</RailItem>)}</Rail>
        <Workspace>
          <CanvasRow>
            <Canvas>
              <Page>
                <Visual>
                  <VisualHead>
                    <VisualTitle>Max of salary_in_usd by work_models and date</VisualTitle>
                    <VisualTools>
                      <S w={24} h={24} stroke="#797775" strokeWidth="1.800"><path d="M1 1.500h22l-8.500 9.500V21.500h-5V11z" /></S>
                      <S w={24} h={24} stroke="#797775" strokeWidth="1.800"><path d="M10 4H2v17h20v-7M2 14h9v7M14 3h7.500v7M21 3.500l-8 8" /></S>
                      <S w={24} h={24} stroke="none"><g fill="#605e5c"><circle cx="3" cy="10" r="2" /><circle cx="12" cy="10" r="2" /><circle cx="21" cy="10" r="2" /></g></S>
                    </VisualTools>
                  </VisualHead>
                  <Legend>
                    <LegendName><Text $size={17} $weight={700} $ls={-0.2} $color="#605e5c">date</Text></LegendName>
                    {series.map(s => (
                      <LegendItem key={s.name}><Swatch $c={s.color} /><Text $size={17.300} $color="#605e5c">{s.name}</Text></LegendItem>
                    ))}
                  </Legend>
                  <AreaChart />
                  {['tl', 'tr', 'bl', 'br'].map(c => <Corner key={c} $at={c} />)}
                  <Handle /><Handle $end /><Handle $v /><Handle $v $end />
                </Visual>
              </Page>
            </Canvas>
            <SidePane $w={49} $bg="#fff" $line="#979593">
              <Chevrons />
              <FilterIcon><S w={18} h={20} stroke="#252423" strokeWidth="1.800"><path d="M18 1.500v18l-7-6.500H2V8h9z" /></S></FilterIcon>
              <Vertical $top={11}>Filters</Vertical>
            </SidePane>
          </CanvasRow>
          <PageTabs>
            <ViewSwitch>
              <ViewMode $active $top={10} $gap={30}><S w={28} h={22} strokeWidth="1.800"><path d="M1 1h26v16H1zM14 17v4M9.500 21h9" /></S></ViewMode>
              <ViewMode $top={7} $gap={11}><S w={19} h={30} strokeWidth="1.800"><rect x="1.500" y="1" width="17" height="28" rx="1" /><path d="M8.500 25.500h3" /></S></ViewMode>
              <Arrow><svg width="6" height="12"><path d="M6 0v12L0 6z" /></svg></Arrow>
              <Arrow><svg width="6" height="12"><path d="M0 0v12l6-6z" /></svg></Arrow>
            </ViewSwitch>
            <PageTab><Text $size={17.100} $ls={0.1}>Salary in usd during covid - 19 vs it's GDP p...</Text></PageTab>
            <PageTab><Text $size={17.100} $ls={0.1}>salary in usd after covid - 19 vs it's GDP per...</Text></PageTab>
            <PageTab $active><Text $size={16.900} $weight={600}>preferabble working models and thier sal...</Text></PageTab>
            <PageTab $w={344}><Text $size={16.900}>prefferable working models and thier sa</Text></PageTab>
            <AddPage><svg width="18" height="18" stroke="#fff" strokeWidth="4"><path d="M9 1v16M1 9h16" /></svg></AddPage>
          </PageTabs>
        </Workspace>
        <SidePane $w={52} $bg={PANE} $line="#dcdad8">
          <Chevrons />
          <Vertical $top={21} $ls={0.5}>Visualizations</Vertical>
        </SidePane>
        <DataPane>
          <PaneHead><Text $size={21} $weight={600}>Data</Text><Chevrons flip /></PaneHead>
          <PaneSearch><Magnifier size={22} color="#605e5c" sw={1.600} /><Text $size={18.700} $ls={0.2} $color="#605e5c">Search</Text></PaneSearch>
          {tree.map((r, i) => r.t ? (
            <TableRow key={i}>
              <S w={17} h={12} stroke="#605e5c" strokeWidth="1.600"><path d="M0.500 1.500l8 8 8-8" /></S>
              <TableIcon>
                <S w={18} h={18} stroke="#252423" strokeWidth="1.700">
                  <rect x="1" y="0.500" width="17" height="16.500" rx="3" /><path d="M1 5.500h17M1 11.500h17M6.500 0.500v16.500M12.500 0.500v16.500" />
                  {r.badge && <g><circle cx="18.500" cy="17.500" r="8.700" fill={GREEN} stroke="none" /><path d="M15 17.500l2.500 2.500 4.500-4.500" stroke="#fff" /></g>}
                </S>
              </TableIcon>
              <Text $size={16.700} $color="#3b3a39">{r.t}</Text>
            </TableRow>
          ) : (
            <FieldRow key={i}>
              <Check $on={r.on}>{r.on && <S w={13} h={10} stroke="#fff" strokeWidth="1.700"><path d="M1 4.500l4 4L12 1" /></S>}</Check>
              <SigmaSlot>{r.s && <S w={16} h={18} stroke="#252423" strokeWidth="1.800"><path d="M15.500 1H1.500L9 8.500 1.500 16h14" /></S>}</SigmaSlot>
              <Text $size={16.750} $color="#3b3a39">{r.f}</Text>
            </FieldRow>
          ))}
        </DataPane>
      </Main>

      <StatusBar>
        <Text $size={17.200} $ls={0.1} $color="#3b3a39">Page 9 of 10</Text>
        <Zoom>
          <S w={184} h={20} stroke="#605e5c"><path d="M0 10.500h6M13 9.500h150M83 5v9" strokeWidth="1.700" /><path d="M80.500 1v17" strokeWidth="5" /><path d="M172 9.500h11M177.500 4v11" strokeWidth="2" /></S>
          <ZoomValue><Text $size={16.700} $color="#605e5c">91%</Text></ZoomValue>
          <S w={24} h={19} stroke="#605e5c"><rect x="1" y="1" width="22" height="17" /><path d="M4.500 7.500v-3H8M16 4.500h3.500v3M19.500 11.500v3H16M8 14.500H4.500v-3" strokeWidth="1.700" /></S>
        </Zoom>
      </StatusBar>

      <Taskbar>
        <Weather>
          <svg width="38" height="44" viewBox="0 0 38 44">
            <defs><linearGradient id="cl" x1="0" y1="0" x2="0" y2="1"><stop stopColor="#b9cff2" /><stop offset="1" stopColor="#8fb4ee" /></linearGradient></defs>
            <path d="M8 35a8 8 0 0 1-1-15.500A12 12 0 0 1 29 18a8.500 8.500 0 0 1 1 17z" fill="url(#cl)" />
            <path d="M7 35a7 7 0 0 1 0-14q8-1 10 5l5-1q8-7 14 3 1 7-7 7z" fill="#cfe0fa" opacity=".65" />
            <circle cx="29" cy="11" r="12" fill="#c42b1c" />
            <text x="29.500" y="16.500" textAnchor="middle" fontSize="15" fill="#fff" fontFamily={UI}>1</text>
          </svg>
          <Stack><StackLine><Text $size={16.500} $ls={-0.1}>22°C</Text></StackLine><StackLine><Text $size={17} $ls={0.2} $color="#605e5c">Cloudy</Text></StackLine></Stack>
        </Weather>
        <StartCell>
          <svg width="35" height="35"><defs><linearGradient id="wn" x1="0" y1="0" x2="1" y2="1"><stop stopColor="#4dc9fb" /><stop offset="1" stopColor="#0568cc" /></linearGradient></defs><path d="M0 1.500Q0 0 1.500 0H17v17H0zM18 0h15.500Q35 0 35 1.500V17H18zM0 18h17v17H1.500Q0 35 0 33.500zM18 18h17v15.500q0 1.500-1.500 1.500H18z" fill="url(#wn)" /></svg>
        </StartCell>
        <TaskSearch>
          <svg width="22" height="24" fill="none" stroke="#252423" strokeWidth="2.500" strokeLinecap="round"><circle cx="9.500" cy="9.500" r="8" /><path d="M15 16l5.500 6" /></svg>
          <SearchWord><Text $size={18.500} $color="#605e5c">Search</Text></SearchWord>
          <svg width="68" height="40" viewBox="0 0 68 40">
            <path d="M1 32l12-8h44l10 8-8 5H10z" fill="#e4c29a" /><path d="M10 37h49l4-2.500-2 3q-1 1.500-4 1.500H14q-3 0-5-2z" fill="#b8946a" />
            <path d="M8 15l22-4 4 17-22 5z" fill="#4e9a55" /><path d="M9 12l11-1 11-3 3 17-11 3-10 3z" fill="#f0eef8" /><path d="M20 11l4 18M12 17l7-1.500M13 21l7-1.500M14 25l7-1.500M24 14l7-2M25 18l6-1.500" stroke="#b2aecb" strokeWidth="1.200" />
            <path d="M26 20l8-15 4 3-9 13z" fill="#f6b23c" /><path d="M33 6l2-4 4 2-2 4z" fill="#e8484f" />
            <path d="M48 5q0-4 4-4t4 4" fill="none" stroke="#0b62c8" strokeWidth="2" /><path d="M43 12q0-9 9-9t9 9v17q0 4-4 4H47q-4 0-4-4z" fill="#0f7df0" /><path d="M45 21q0-4 7-4t7 4v9q0 3-7 3t-7-3z" fill="#0960d0" /><path d="M46 29h12" stroke="#8d6cf0" strokeWidth="1.500" />
          </svg>
        </TaskSearch>
        {apps.map(a => (
          <AppCell key={a.k}>
            <AppTile $active={a.active}>{a.el}</AppTile>
            {a.run && <Running $active={a.active} />}
          </AppCell>
        ))}
        <Tray>
          <TrayCell $w={48}><S w={16} h={10} stroke="#252423" strokeWidth="1.800"><path d="M1 9l7-7.500L15 9" /></S></TrayCell>
          <TrayCell $w={48}><S w={25} h={18} strokeWidth="1.800"><path d="M6.500 16.500a5.500 5.500 0 0 1-1-10.500C8-1 17 0 19 6.500c7 1 6 10 0 10z" fill="#a9a9a9" stroke="#222" /><path d="M2 12l11-4 10 5q-1 3-4 3.500H6q-3-1-4-4.500z" fill="#ddd" stroke="none" /></S></TrayCell>
          <TrayCell $w={48}><S w={25} h={18} stroke="none"><path d="M6 17.500A6 6 0 0 1 5 5.500C8-2 17-1 19 6c8 1 7 11.500 0 11.500z" fill="#0f6cc4" /><path d="M5 17.500q-5-1-5-6t6-6l9 5-8 7z" fill="#1482dc" /><path d="M4 16l11-6 9 5q-2 2.500-5 2.500H7q-2 0-3-1.500z" fill="#28a8ea" /></S></TrayCell>
          <TrayCell $w={48}><S w={24} h={20} stroke="#252423" strokeWidth="1.800"><path d="M1 8Q12-3 23 8M4.500 11.500q7.500-8 15 0M8 15q4-4.500 8 0" /><circle cx="12" cy="17.500" r="1.500" fill="#252423" /></S></TrayCell>
          <TrayCell $w={24}><S w={24} h={20} stroke="#252423" strokeWidth="1.700"><path d="M1 7h4l6-5.500v17L5 13H1zM15 6.500l7 7M22 6.500l-7 7" /></S></TrayCell>
          <TrayCell $w={48}><S w={25} h={18} stroke="#252423" strokeWidth="1.800"><rect x="1" y="2" width="20" height="14" rx="3" /><rect x="4" y="5" width="14" height="8" rx="1" fill="#252423" stroke="none" /><path d="M23.500 7v4" strokeWidth="2.500" /></S></TrayCell>
          <TrayCell $w={96}><Stack $right><StackLine><Text $size={17} $ls={0.1}>9:49 AM</Text></StackLine><StackLine><Text $size={17} $ls={0.1}>4/26/2024</Text></StackLine></Stack></TrayCell>
          <TrayCell $w={34} $pad={11}><svg width="20" height="24"><path d="M10 0q7 0 7 8v6l3 4v1.500H0V18l3-4V8q0-8 7-8zM6 21h8q-1 3-4 3t-4-3z" fill="#164a5b" /></svg></TrayCell>
        </Tray>
      </Taskbar>
    </Screen>
  );
}
